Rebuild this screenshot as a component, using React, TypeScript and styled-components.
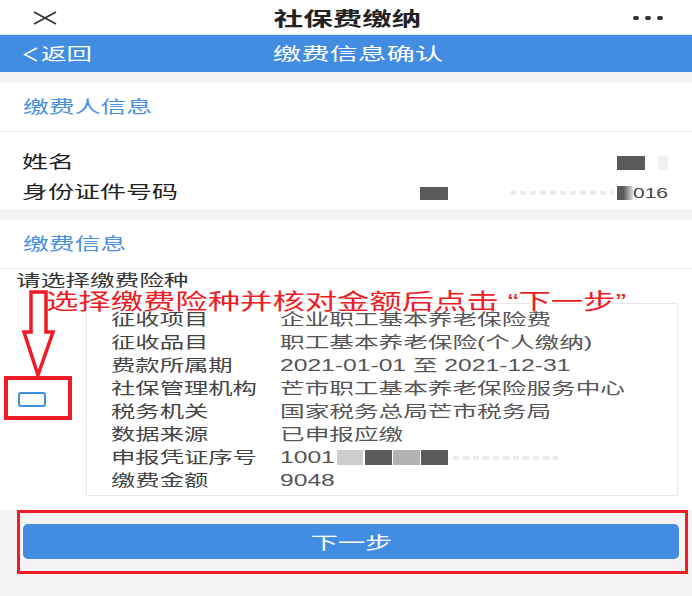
import React from "react";
import styled, { createGlobalStyle, css } from "styled-components";

const FONT = `"Liberation Sans", "Noto Sans CJK SC", sans-serif`;
const RED = "#ee1c25";
const BLUE = "#428ce2";

// the screenshot is stretched sideways, so text is widened with scaleX
const stretch = (k: number, origin = "left") => css`
  display: inline-block;
  white-space: nowrap;
  transform: scaleX(${k});
  transform-origin: ${origin} center;
`;

const GlobalStyle = createGlobalStyle`
  html, body {
    margin: 0;
    padding: 0;
    background: #f4f4f4;
  }
  body {
    font-family: ${FONT};
    -webkit-font-smoothing: antialiased;
  }
  * {
    box-sizing: border-box;
  }
`;

const Page = styled.div`
  width: 692px;
  min-height: 596px;
  overflow: hidden;
  background: #f4f4f4;
  display: flex;
  flex-direction: column;
`;

const TopBar = styled.header`
  height: 35px;
  padding: 1px 29px 0 33px;
  background: #fff;
  border-bottom: 1px solid #d6e4f6;
  display: grid;
  grid-template-columns: 1fr auto 1fr;
  align-items: center;
`;

const TopTitle = styled.span`
  font-family: "Noto Sans CJK SC", sans-serif;
  font-size: 19px;
  font-weight: 700;
  line-height: 20px;
  color: #222;
  ${stretch(1.55, "center")}
`;

const Dots = styled.div`
  justify-self: end;
  display: flex;
  gap: 6px;
  span {
    width: 6px;
    height: 4px;
    border-radius: 2px;
    background: #333;
  }
`;

const NavBar = styled.nav`
  height: 37px;
  padding: 2px 0 0 23px;
  background: ${BLUE};
  display: grid;
  grid-template-columns: 1fr auto 1fr;
  align-items: center;
  color: #fff;
`;

const Back = styled.div`
  display: flex;
  align-items: center;
  gap: 3px;
`;

const BackText = styled.span`
  font-size: 17px;
  line-height: 20px;
  ${stretch(1.5)}
`;

const NavTitle = styled.span`
  font-size: 17px;
  line-height: 20px;
  ${stretch(1.67, "center")}
`;

const Section = styled.section`
  position: relative;
  margin-top: 11px;
  background: #fff;
`;

const SectionHead = styled.div`
  height: 49px;
  padding: 2px 0 0 23px;
  display: flex;
  align-items: center;
  border-bottom: 1px solid #efefef;
`;

const HeadText = styled.span`
  font-size: 17px;
  line-height: 20px;
  color: #4a90e2;
  ${stretch(1.52)}
`;

const InfoList = styled.div`
  padding: 16px 0 1px;
`;

const InfoRow = styled.div`
  height: 30px;
  padding: 0 24px 0 22px;
  display: flex;
  align-items: center;
  justify-content: space-between;
`;

const InfoLabel = styled.span`
  font-size: 17px;
  line-height: 20px;
  color: #222;
  ${stretch(1.53)}
`;

const Values = styled.div`
  display: flex;
  align-items: center;
`;

const Mask = styled.i<{ $w: number; $h?: number; $tone?: string; $gap?: number }>`
  display: block;
  width: ${(p) => p.$w}px;
  height: ${(p) => p.$h ?? 14}px;
  margin-left: ${(p) => p.$gap ?? 0}px;
  background: ${(p) => p.$tone ?? "#5b5b5b"};
`;

const Fade = styled.i<{ $w: number; $gap?: number }>`
  display: block;
  width: ${(p) => p.$w}px;
  height: 14px;
  margin-left: ${(p) => p.$gap ?? 0}px;
  margin-right: 10px;
  background: linear-gradient(90deg, #5b5b5b 40%, rgba(91, 91, 91, 0.2));
`;

const Faint = styled.i<{ $w: number; $gap?: number }>`
  display: block;
  width: ${(p) => p.$w}px;
  height: 4px;
  margin-left: ${(p) => p.$gap ?? 0}px;
  background: repeating-linear-gradient(90deg, #ececec 0 6px, transparent 6px 10px);
`;

const TailDigits = styled.span`
  font-size: 15px;
  line-height: 18px;
  color: #444;
  ${stretch(1.4, "right")}
`;

const Prompt = styled.div`
  height: 23px;
  padding: 1px 0 0 16px;
  line-height: 22px;
`;

const PromptText = styled.span`
  font-size: 16px;
  color: #333;
  ${stretch(1.54)}
`;

const ChoiceRow = styled.div`
  margin-top: 11px;
  padding-bottom: 14px;
  display: flex;
  align-items: center;
`;

const CheckCell = styled.div`
  width: 86px;
  padding-left: 18px;
`;

const Checkbox = styled.div`
  width: 28px;
  height: 15px;
  border: 2.5px solid #3d8fe6;
  border-radius: 3px;
`;

const Card = styled.div`
  flex: 1;
  margin-right: 14px;
  padding: 4px 0 3px 24px;
  border: 1px solid #e8e8e8;
  background: #fff;
`;

const CardRow = styled.div`
  height: 23px;
  display: grid;
  grid-template-columns: 169px 1fr;
  align-items: center;
`;

const CardLabel = styled.span`
  font-size: 16px;
  line-height: 18px;
  color: #444;
  ${stretch(1.52)}
`;

const CardValue = styled.span`
  font-size: 16px;
  line-height: 18px;
  color: #555;
  ${stretch(1.54)}
`;

const Note = styled.div`
  position: absolute;
  left: 46px;
  top: 73px;
  font-size: 22px;
  line-height: 18px;
  color: ${RED};
  ${stretch(1.47)}
`;

const Arrow = styled.svg`
  position: absolute;
  left: 20px;
  top: 68px;
`;

const MarkBox = styled.div`
  position: absolute;
  left: 4px;
  top: 156px;
  width: 68px;
  height: 44px;
  border: 4px solid ${RED};
`;

const Footer = styled.footer`
  flex: 1;
  padding: 0 4px 0 17px;
`;

const RedFrame = styled.div`
  padding: 11px 6px 12px 3px;
  border: 3px solid ${RED};
`;

const NextButton = styled.button`
  width: 100%;
  height: 35px;
  padding: 4px 0 0;
  border: 0;
  border-radius: 5px;
  background: ${BLUE};
  color: #fff;
  display: flex;
  align-items: center;
  justify-content: center;
  font-family: ${FONT};
`;

const NextText = styled.span`
  font-size: 17px;
  line-height: 20px;
  ${stretch(1.6, "center")}
`;

const rows: [string, React.ReactNode][] = [
  ["征收项目", "企业职工基本养老保险费"],
  ["征收品目", "职工基本养老保险(个人缴纳)"],
  ["费款所属期", "2021-01-01 至 2021-12-31"],
  ["社保管理机构", "芒市职工基本养老保险服务中心"],
  ["税务机关", "国家税务总局芒市税务局"],
  ["数据来源", "已申报应缴"],
  [
    "申报凭证序号",
    <Values>
      <CardValue>1001</CardValue>
      <Mask $w={26} $h={15} $tone="#cdcdcd" $gap={21} />
      <Mask $w={27} $h={15} $gap={2} />
      <Mask $w={27} $h={15} $tone="#b3b3b3" $gap={1} />
      <Mask $w={27} $h={15} $gap={1} />
      <Faint $w={105} $gap={5} />
    </Values>,
  ],
  ["缴费金额", "9048"],
];

export default function App() {
  return (
    <Page>
      <GlobalStyle />
      <TopBar>
        <svg width="24" height="14" viewBox="0 0 24 14">
          <path d="M1 1 L23 13 M23 1 L1 13" stroke="#333" strokeWidth="1.8" />
        </svg>
        <TopTitle>社保费缴纳</TopTitle>
        <Dots>
          <span />
          <span />
          <span />
        </Dots>
      </TopBar>

      <NavBar>
        <Back>
          <svg width="15" height="15" viewBox="0 0 15 15">
            <polyline points="14,1 1.5,7.5 14,14" fill="none" stroke="#fff" strokeWidth="1.6" />
          </svg>
          <BackText>返回</BackText>
        </Back>
        <NavTitle>缴费信息确认</NavTitle>
        <span />
      </NavBar>

      <Section>
        <SectionHead>
          <HeadText>缴费人信息</HeadText>
        </SectionHead>
        <InfoList>
          <InfoRow>
            <InfoLabel>姓名</InfoLabel>
            <Values>
              <Mask $w={28} />
              <Mask $w={10} $tone="#f1f1f1" $gap={13} />
            </Values>
          </InfoRow>
          <InfoRow>
            <InfoLabel>身份证件号码</InfoLabel>
            <Values>
              <Mask $w={28} $h={13} />
              <Faint $w={103} $gap={62} />
              <Fade $w={16} $gap={4} />
              <TailDigits>016</TailDigits>
            </Values>
          </InfoRow>
        </InfoList>
      </Section>

      <Section>
        <SectionHead>
          <HeadText>缴费信息</HeadText>
        </SectionHead>
        <Prompt>
          <PromptText>请选择缴费险种</PromptText>
        </Prompt>
        <ChoiceRow>
          <CheckCell>
            <Checkbox />
          </CheckCell>
          <Card>
            {rows.map(([label, value]) => (
              <CardRow key={label}>
                <CardLabel>{label}</CardLabel>
                {typeof value === "string" ? <CardValue>{value}</CardValue> : value}
              </CardRow>
            ))}
          </Card>
        </ChoiceRow>

        <Note>选择缴费险种并核对金额后点击 “下一步”</Note>
        <Arrow width="36" height="90" viewBox="0 0 36 90">
          <path
            d="M11 4 H26 V44 H33 L18 87 L4 44 H11 Z"
            fill="#fff"
            stroke={RED}
            strokeWidth="3.5"
            strokeLinejoin="miter"
          />
        </Arrow>
        <MarkBox />
      </Section>

      <Footer>
        <RedFrame>
          <NextButton>
            <NextText>下一步</NextText>
          </NextButton>
        </RedFrame>
      </Footer>
    </Page>
  );
}
